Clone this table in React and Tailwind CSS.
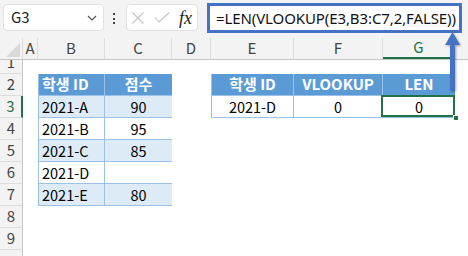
import React from "react";

const cellFont = { fontFamily: '"Noto Sans CJK KR", "Noto Sans", sans-serif' };

function RowHead({ label, active }) {
  return (
    <div
      className={
        active
          ? "w-[23px] shrink-0 h-full flex items-center justify-center bg-[#f3f3f3] border-b border-[#dcdcdc] border-r-2 border-r-[#217346] text-[#217346] text-[15px]"
          : "w-[23px] shrink-0 h-full flex items-center justify-center bg-[#f3f3f3] border-b border-[#dcdcdc] border-r border-r-[#c8c8c8] text-[#444] text-[15px]"
      }
    >
      {label}
    </div>
  );
}

const ColHead = ({ className, children }) => (
  <div
    className={
      "h-full shrink-0 flex items-center justify-center border-r border-[#dcdcdc] text-[15px] " +
      className
    }
  >
    {children}
  </div>
);

// left table B2:C7 body rows
const scores = [
  ["2021-A", "90", true],
  ["2021-B", "95", false],
  ["2021-C", "85", true],
  ["2021-D", "", false],
  ["2021-E", "80", true],
];

export default function App() {
  return (
    <div
      className="relative w-[468px] h-[256px] overflow-hidden bg-white text-black"
      style={cellFont}
    >
      {/* formula toolbar */}
      <div className="h-[38px] bg-[#f3f3f3] flex items-start">
        <div className="ml-[3px] mt-[4px] w-[101px] h-[27px] bg-white border border-[#e1e1e1] rounded-[4px] flex items-center pl-[7px] pr-[6px]">
          <span className="text-[15px] text-[#222]">G3</span>
          <svg className="ml-auto" width="10" height="6" viewBox="0 0 10 6">
            <polyline points="1,1 5,5 9,1" fill="none" stroke="#555" strokeWidth="1.2" />
          </svg>
        </div>
        <div className="ml-[9px] mt-[13px] w-[2px] flex flex-col gap-[2.5px]">
          <div className="w-[2px] h-[2px] bg-[#444]" />
          <div className="w-[2px] h-[2px] bg-[#444]" />
          <div className="w-[2px] h-[2px] bg-[#444]" />
        </div>
        <div className="ml-[11px] mt-[4px] w-[72px] h-[27px] bg-white border border-[#e1e1e1] rounded-[4px] flex items-center pl-[5px]">
          <svg width="12" height="12" viewBox="0 0 12 12">
            <path d="M0.5 0.5 L11.5 11.5 M11.5 0.5 L0.5 11.5" stroke="#c4c4c4" strokeWidth="1.1" />
          </svg>
          <svg className="ml-[10px]" width="16" height="11" viewBox="0 0 16 11">
            <polyline points="0.5,5 5,10 15.5,0.5" fill="none" stroke="#c4c4c4" strokeWidth="1.1" />
          </svg>
          <span
            className="ml-[9px] italic text-[18px] leading-none text-[#222]"
            style={{ fontFamily: '"Liberation Serif", serif' }}
          >
            fx
          </span>
        </div>
        <div className="ml-[9px] mt-[3px] w-[255px] h-[30px] bg-white border-[3px] border-[#4472c4] flex items-center pl-[6px]">
          <span
            className="text-[15px] tracking-[-0.1px] text-[#111] whitespace-nowrap"
            style={{ fontFamily: '"Noto Sans", sans-serif' }}
          >
            =LEN(VLOOKUP(E3,B3:C7,2,FALSE))
          </span>
        </div>
      </div>

      {/* column headers */}
      <div className="h-[22px] flex bg-[#f3f3f3] border-b border-[#c6c6c6] text-[#444]">
        <div className="w-[23px] h-full shrink-0 border-r border-[#dcdcdc]">
          <svg width="22" height="21" viewBox="0 0 22 21">
            <polygon points="20,5 20,19 6,19" fill="#d9d9d9" />
          </svg>
        </div>
        <ColHead className="w-[15px]">A</ColHead>
        <ColHead className="w-[67px]">B</ColHead>
        <ColHead className="w-[67px]">C</ColHead>
        <ColHead className="w-[39px]">D</ColHead>
        <ColHead className="w-[83px]">E</ColHead>
        <ColHead className="w-[89px]">F</ColHead>
        <ColHead className="w-[72px] text-[#217346] border-b-2 border-b-[#217346]">G</ColHead>
        <div className="flex-1" />
      </div>

      {/* row 1, partly scrolled under the headers */}
      <div className="h-[14px] flex overflow-hidden">
        <div className="w-[23px] shrink-0 h-full bg-[#f3f3f3] border-b border-[#dcdcdc] border-r border-r-[#c8c8c8] overflow-hidden">
          <div className="h-[22px] -mt-[9px] flex items-center justify-center text-[15px] text-[#444]">1</div>
        </div>
      </div>

      {/* row 2: table headers */}
      <div className="h-[22px] flex">
        <RowHead label="2" />
        <div className="w-[15px] shrink-0" />
        <div className="w-[67px] shrink-0 bg-[#5b9bd5] border-l border-r border-b border-[#9bc2e6] text-white font-bold text-[15px] flex items-center pl-[3px]">
          학생 ID
        </div>
        <div className="w-[67px] shrink-0 bg-[#5b9bd5] border-b border-[#9bc2e6] text-white font-bold text-[15px] flex items-center justify-center">
          점수
        </div>
        <div className="w-[39px] shrink-0" />
        <div className="w-[83px] shrink-0 bg-[#5b9bd5] border-l border-r border-b border-[#9bc2e6] text-white font-bold text-[15px] flex items-center justify-center">
          학생 ID
        </div>
        <div className="w-[89px] shrink-0 bg-[#5b9bd5] border-r border-b border-[#9bc2e6] text-white font-bold text-[15px] flex items-center justify-center">
          VLOOKUP
        </div>
        <div className="w-[72px] shrink-0 bg-[#5b9bd5] border-b border-[#9bc2e6] text-white font-bold text-[15px] flex items-center justify-center">
          LEN
        </div>
      </div>

      {/* rows 3-7 */}
      {scores.map(([id, score, band], i) => (
        <div key={id} className="h-[22px] flex">
          <RowHead label={String(i + 3)} active={i === 0} />
          <div className="w-[15px] shrink-0" />
          <div
            className={
              band
                ? "w-[67px] shrink-0 bg-[#ddebf7] border-l border-r border-b border-[#9bc2e6] text-[14.5px] flex items-center pl-[3px]"
                : "w-[67px] shrink-0 bg-white border-l border-r border-b border-[#9bc2e6] text-[14.5px] flex items-center pl-[3px]"
            }
          >
            {id}
          </div>
          <div
            className={
              band
                ? "w-[67px] shrink-0 bg-[#ddebf7] border-b border-[#9bc2e6] text-[14.5px] flex items-center justify-center"
                : "w-[67px] shrink-0 bg-white border-b border-[#9bc2e6] text-[14.5px] flex items-center justify-center"
            }
          >
            {score}
          </div>
          {i === 0 && (
            <>
              <div className="w-[39px] shrink-0" />
              <div className="w-[83px] shrink-0 border-l border-r border-b border-[#9bc2e6] text-[14.5px] flex items-center justify-center">
                2021-D
              </div>
              <div className="w-[89px] shrink-0 border-r border-b border-[#9bc2e6] text-[14.5px] flex items-center justify-center">
                0
              </div>
              <div className="relative w-[72px] shrink-0 border-b border-[#9bc2e6] text-[14.5px] flex items-center justify-center">
                0
                <div className="absolute -left-[2px] -top-[1px] right-0 bottom-0 border-2 border-[#217346]" />
                <div className="absolute -right-[4px] -bottom-[4px] w-[6px] h-[6px] bg-[#217346] border border-white" />
              </div>
            </>
          )}
        </div>
      ))}

      {/* rows 8-9, then the top edge of row 10 */}
      {["8", "9", ""].map((n, i) => (
        <div key={i} className="h-[22px] flex">
          <RowHead label={n} />
        </div>
      ))}

      {/* arrow from the formula to the result cell */}
      <svg
        className="absolute left-[440px] top-[28px] drop-shadow-[1px_1px_1px_rgba(0,0,0,0.35)]"
        width="28"
        height="68"
        viewBox="440 28 28 68"
      >
        <polygon points="452.5,32 445,45 460,45" fill="#4472c4" />
        <rect x="450" y="44" width="5" height="47" rx="2.5" fill="#4472c4" />
      </svg>
    </div>
  );
}
